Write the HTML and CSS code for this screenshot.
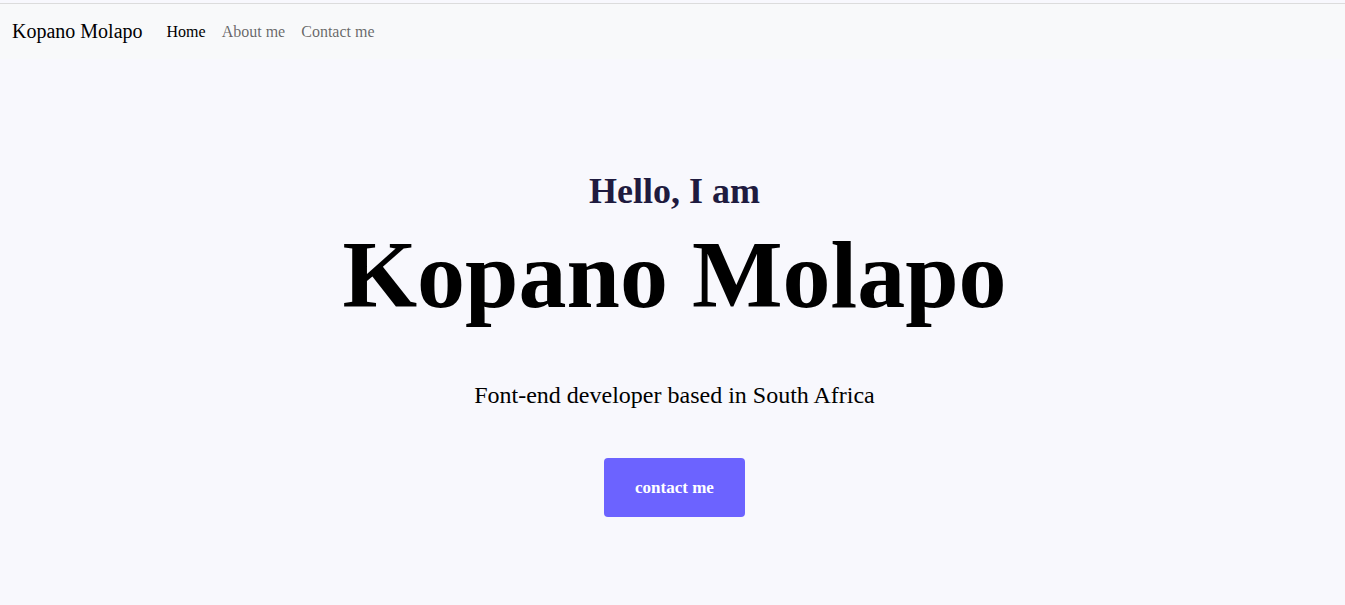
FILE: index.html
```html
<!DOCTYPE html>
<html lang="en">
<head>
<meta charset="utf-8">
<title>Kopano Molapo</title>
<link rel="stylesheet" href="styles.css">
</head>
<body>
<div class="topline"></div>
<nav class="navbar">
  <a class="brand" href="#">Kopano Molapo</a>
  <ul class="links">
    <li><a class="link active" href="#">Home</a></li>
    <li><a class="link" href="#">About me</a></li>
    <li><a class="link" href="#">Contact me</a></li>
  </ul>
</nav>
<main class="hero">
  <h2 class="greet">Hello, I am</h2>
  <h1 class="name">Kopano Molapo</h1>
  <p class="tagline">Font-end developer based in South Africa</p>
  <a class="btn" href="#">contact me</a>
</main>
</body>
</html>
```
FILE: styles.css
```css
* { box-sizing: border-box; }
html, body { margin: 0; padding: 0; }
body {
  font-family: "Liberation Serif", "Times New Roman", serif;
  background: #f8f8fd;
  color: #000;
  height: 605px;
  padding-top: 3px;
}
.topline {
  height: 1px;
  background: #dcdcdc;
}
.navbar {
  display: flex;
  align-items: center;
  height: 55px;
  padding: 0 12px;
  background: #f8f9fa;
}
.brand {
  font-size: 20px;
  color: #000;
  text-decoration: none;
  margin-right: 16px;
}
.links {
  display: flex;
  list-style: none;
  margin: 0;
  padding: 0;
}
.link {
  display: block;
  padding: 8px;
  font-size: 16px;
  color: rgba(0,0,0,.6);
  text-decoration: none;
}
.link.active { color: #000; }
.hero {
  display: flex;
  flex-direction: column;
  align-items: center;
  text-align: center;
  padding: 111px 0 0 4px;
}
.greet {
  margin: 0;
  font-size: 36px;
  font-weight: bold;
  color: #1f1b3f;
  line-height: 1.2;
}
.name {
  margin: 4px 0 0;
  font-size: 96px;
  font-weight: bold;
  line-height: 1.2;
}
.tagline {
  margin: 49px 0 0;
  font-size: 24px;
  line-height: 1.2;
}
.btn {
  margin-top: 48px;
  display: flex;
  align-items: center;
  justify-content: center;
  width: 141px;
  height: 59px;
  background: #6c63ff;
  color: #fff;
  font-weight: bold;
  font-size: 17px;
  border-radius: 4px;
  text-decoration: none;
}
```
